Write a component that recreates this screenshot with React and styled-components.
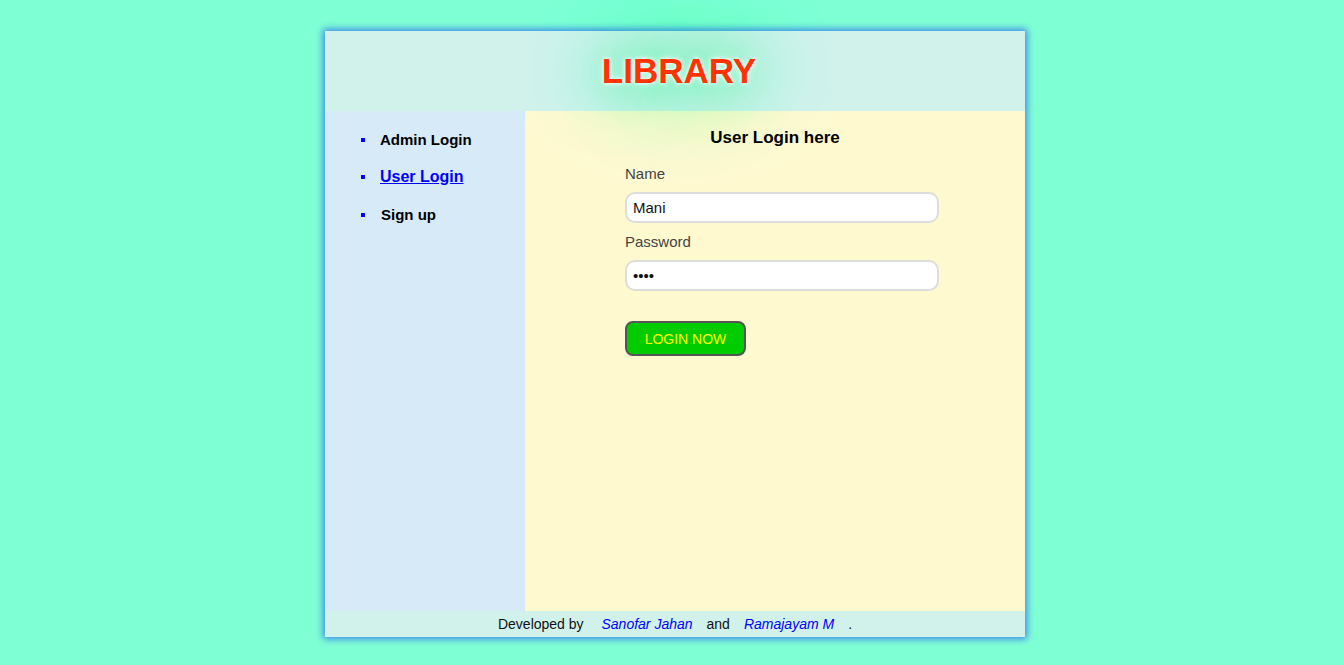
import React from "react";
import styled, { createGlobalStyle } from "styled-components";

const GlobalStyle = createGlobalStyle`
  html, body {
    margin: 0;
    padding: 0;
    background: #7fffd4;
    font-family: "Liberation Sans", Arial, sans-serif;
  }
`;

const Page = styled.div`
  min-height: 665px;
  padding: 31px 0 0 7px;
  box-sizing: border-box;
`;

const Wrapper = styled.div`
  width: 700px;
  margin: 0 auto;
  box-shadow: 0 0 7px 2px #3f86ea;
  display: grid;
  grid-template-columns: 200px 500px;
  grid-template-rows: 80px 500px 26px;
`;

const Header = styled.header`
  grid-column: 1 / 3;
  background: #d1f2eb;
  display: flex;
  align-items: center;
  justify-content: center;
  position: relative;
  z-index: 2;
`;

const Title = styled.h1`
  margin: 0 0 0 8px;
  font-size: 35px;
  font-weight: bold;
  color: #ff3300;
  text-shadow: 0 0 3px #ffffff, 0 0 6px #ffffff, 0 0 40px #33ff99,
    0 0 80px #33ff99, 0 0 110px #55ff99;
`;

const Sidebar = styled.nav`
  background: #d6eaf8;
  padding-top: 19px;
`;

const Menu = styled.ul`
  list-style: none;
  margin: 0;
  padding-left: 55px;
`;

const MenuItem = styled.li`
  position: relative;
  margin-bottom: ${(p) => (p.$active ? "18px" : "17px")};
  font-size: ${(p) => (p.$active ? "16px" : "15px")};
  font-weight: bold;
  line-height: 20px;

  &::before {
    content: "";
    position: absolute;
    left: -19px;
    top: 8px;
    width: 4px;
    height: 4px;
    background: #0000ff;
  }

  a {
    color: ${(p) => (p.$active ? "#0000ff" : "#000000")};
    text-decoration: ${(p) => (p.$active ? "underline" : "none")};
    margin-left: ${(p) => (p.$indent ? "1px" : "0")};
  }
`;

const Main = styled.main`
  background: #fff9d0;
  padding-top: 17px;
`;

const Heading = styled.h3`
  margin: 0 0 17px;
  text-align: center;
  font-size: 17px;
  line-height: 20px;
`;

const Form = styled.form`
  width: 314px;
  margin-left: 100px;
`;

const Label = styled.label`
  display: block;
  font-size: 15px;
  color: #444444;
  line-height: 18px;
  margin-bottom: 9px;
`;

const Input = styled.input`
  display: block;
  box-sizing: border-box;
  width: 314px;
  height: 31px;
  border: 2px solid #dddddd;
  border-radius: 10px;
  padding: 0 6px;
  font-family: "Liberation Sans", Arial, sans-serif;
  font-size: 15px;
  color: #111111;
  background: #ffffff;
  margin-bottom: 10px;
  outline: none;
`;

const Button = styled.button`
  margin-top: 20px;
  width: 121px;
  height: 35px;
  background: #00cc00;
  color: #ffff00;
  border: 2px solid #555555;
  border-radius: 8px;
  font-family: "Liberation Sans", Arial, sans-serif;
  font-size: 14px;
  cursor: pointer;
`;

const Footer = styled.footer`
  grid-column: 1 / 3;
  background: #d1f2eb;
  text-align: center;
  font-size: 14px;
  line-height: 26px;
  color: #111111;
`;

const Author = styled.a`
  color: #0000ff;
  font-style: italic;
  text-decoration: none;
  margin: 0 14px;
`;

export default function App() {
  return (
    <Page>
      <GlobalStyle />
      <Wrapper>
        <Header>
          <Title>LIBRARY</Title>
        </Header>
        <Sidebar>
          <Menu>
            <MenuItem>
              <a href="#admin">Admin Login</a>
            </MenuItem>
            <MenuItem $active>
              <a href="#user">User Login</a>
            </MenuItem>
            <MenuItem $indent>
              <a href="#signup">Sign up</a>
            </MenuItem>
          </Menu>
        </Sidebar>
        <Main>
          <Heading>User Login here</Heading>
          <Form onSubmit={(e) => e.preventDefault()}>
            <Label>Name</Label>
            <Input type="text" defaultValue="Mani" />
            <Label>Password</Label>
            <Input type="password" defaultValue="mani" />
            <Button type="submit">LOGIN NOW</Button>
          </Form>
        </Main>
        <Footer>
          Developed by <Author>Sanofar Jahan</Author>and
          <Author>Ramajayam M</Author>.
        </Footer>
      </Wrapper>
    </Page>
  );
}
